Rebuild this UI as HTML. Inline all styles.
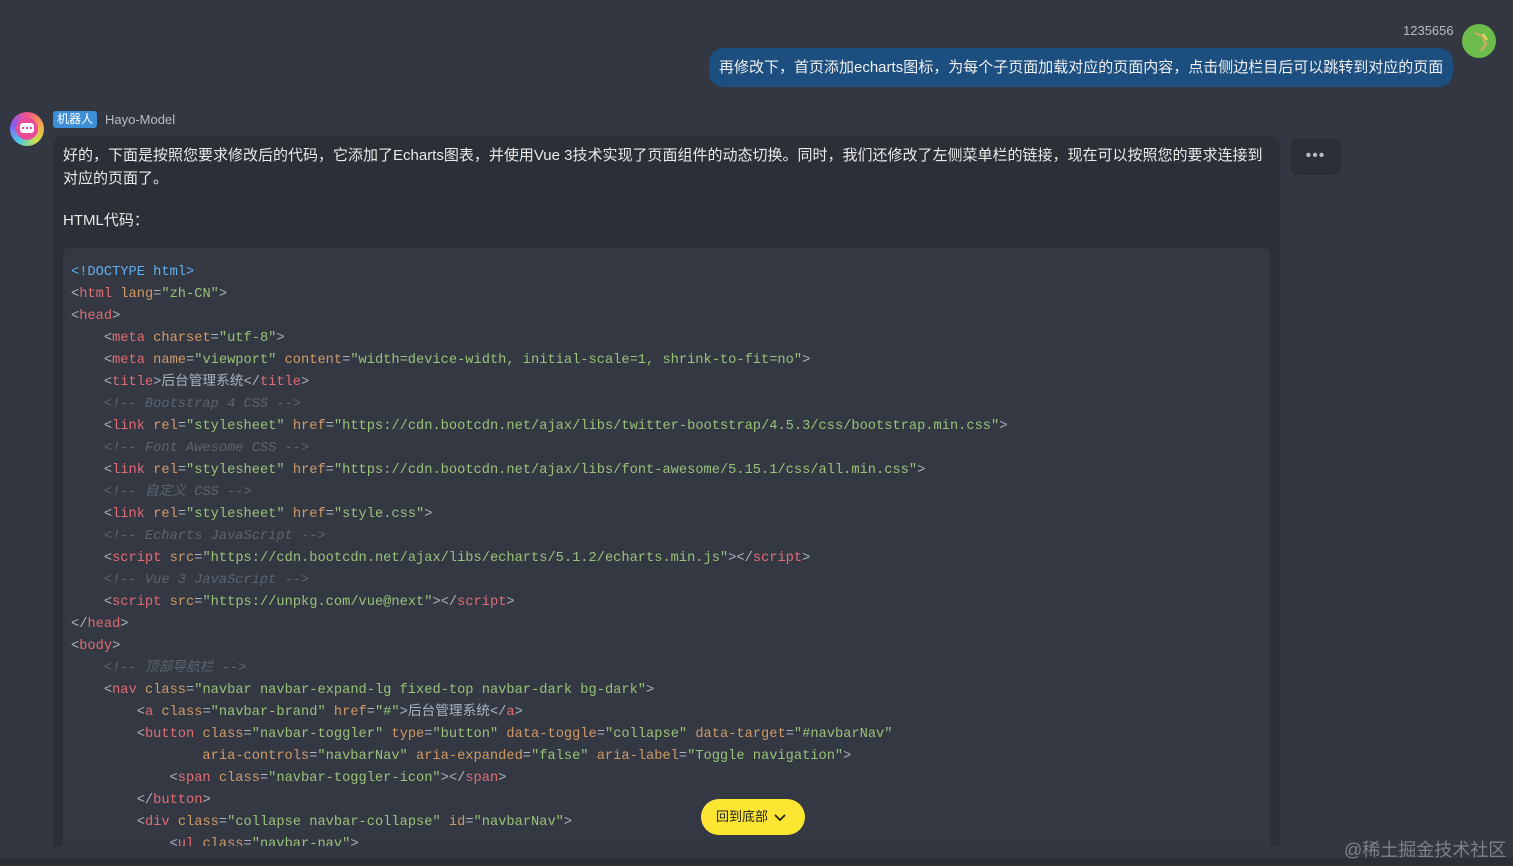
<!DOCTYPE html>
<html><head><meta charset="utf-8"><style>
*{margin:0;padding:0;box-sizing:border-box}
body{width:1513px;height:866px;overflow:hidden;background:#323741;font-family:"Liberation Sans","Noto Sans CJK SC",sans-serif;color:#e6e6e6;position:relative}
.abs{position:absolute}
.ub{left:709px;top:48px;width:744px;height:39px;background:#1c4f80;border-radius:14px;font-size:15px;line-height:39px;padding-left:10px;color:#f0f0f0;white-space:nowrap;letter-spacing:0px}
.bubble{left:53px;top:136px;width:1227px;height:710px;background:#2b2f36;border-radius:10px 10px 0 0;overflow:hidden}
.txt{position:absolute;left:10px;top:8px;width:1210px;font-size:15px;line-height:23px;color:#eaeaea;letter-spacing:0px}
.code{position:absolute;left:10px;top:112px;width:1207px;height:640px;background:#333842;border-radius:6px}
pre{position:absolute;left:8px;top:14px;font-family:"Liberation Mono","Noto Sans CJK SC",monospace;font-size:13.7px;line-height:22px;color:#abb2bf}
.t{color:#e06c75}.a{color:#d19a66}.s{color:#98c379}.c{color:#5c6370;font-style:italic}.b{color:#61afef}
</style></head><body>
<div class="abs" style="left:1403px;top:23px;font-size:13px;color:#b9bcc2">1235656</div>
<div class="abs" style="left:1462px;top:24px;width:34px;height:34px;border-radius:50%;background:#6dbb4a"><svg width="34" height="34"><path d="M13 9 L20 12 L24 20 L19 27" stroke="#d9a860" stroke-width="2" fill="none"/><path d="M21 10 L25 16" stroke="#e7e070" stroke-width="2"/></svg></div>
<div class="abs ub">再修改下，首页添加echarts图标，为每个子页面加载对应的页面内容，点击侧边栏目后可以跳转到对应的页面</div>
<div class="abs" style="left:10px;top:112px;width:34px;height:34px;border-radius:50%;background:conic-gradient(#f0508a,#f7a64a,#c8e04a,#4ac8e8,#8a5af0,#f0508a)"><div style="position:absolute;left:6px;top:6px;width:22px;height:22px;border-radius:50%;background:#e94a9a"></div><div style="position:absolute;left:10px;top:11px;width:14px;height:10px;border-radius:3px;background:#fff"></div><div style="position:absolute;left:12px;top:15px;width:10px;height:2px;background:repeating-linear-gradient(90deg,#e94a9a 0 2px,transparent 2px 4px)"></div></div>
<div class="abs" style="left:53px;top:111px;width:44px;height:17px;background:#3d8fd8;border-radius:3px;font-size:12px;line-height:17px;text-align:center;color:#fff">机器人</div>
<div class="abs" style="left:105px;top:111px;font-size:13px;line-height:17px;color:#b9bcc2">Hayo-Model</div>
<div class="abs bubble">
<div class="txt" style="top:8px">好的，下面是按照您要求修改后的代码，它添加了Echarts图表，并使用Vue 3技术实现了页面组件的动态切换。同时，我们还修改了左侧菜单栏的链接，现在可以按照您的要求连接到对应的页面了。<br><br><div style="margin-top:-4px">HTML代码：</div></div>
<div class="code"><pre><span class="b">&lt;!DOCTYPE html&gt;</span>
&lt;<span class="t">html</span> <span class="a">lang</span>=<span class="s">"zh-CN"</span>&gt;
&lt;<span class="t">head</span>&gt;
    &lt;<span class="t">meta</span> <span class="a">charset</span>=<span class="s">"utf-8"</span>&gt;
    &lt;<span class="t">meta</span> <span class="a">name</span>=<span class="s">"viewport"</span> <span class="a">content</span>=<span class="s">"width=device-width, initial-scale=1, shrink-to-fit=no"</span>&gt;
    &lt;<span class="t">title</span>&gt;后台管理系统&lt;/<span class="t">title</span>&gt;
    <span class="c">&lt;!-- Bootstrap 4 CSS --&gt;</span>
    &lt;<span class="t">link</span> <span class="a">rel</span>=<span class="s">"stylesheet"</span> <span class="a">href</span>=<span class="s">"https://cdn.bootcdn.net/ajax/libs/twitter-bootstrap/4.5.3/css/bootstrap.min.css"</span>&gt;
    <span class="c">&lt;!-- Font Awesome CSS --&gt;</span>
    &lt;<span class="t">link</span> <span class="a">rel</span>=<span class="s">"stylesheet"</span> <span class="a">href</span>=<span class="s">"https://cdn.bootcdn.net/ajax/libs/font-awesome/5.15.1/css/all.min.css"</span>&gt;
    <span class="c">&lt;!-- 自定义 CSS --&gt;</span>
    &lt;<span class="t">link</span> <span class="a">rel</span>=<span class="s">"stylesheet"</span> <span class="a">href</span>=<span class="s">"style.css"</span>&gt;
    <span class="c">&lt;!-- Echarts JavaScript --&gt;</span>
    &lt;<span class="t">script</span> <span class="a">src</span>=<span class="s">"https://cdn.bootcdn.net/ajax/libs/echarts/5.1.2/echarts.min.js"</span>&gt;&lt;/<span class="t">script</span>&gt;
    <span class="c">&lt;!-- Vue 3 JavaScript --&gt;</span>
    &lt;<span class="t">script</span> <span class="a">src</span>=<span class="s">"https://unpkg.com/vue@next"</span>&gt;&lt;/<span class="t">script</span>&gt;
&lt;/<span class="t">head</span>&gt;
&lt;<span class="t">body</span>&gt;
    <span class="c">&lt;!-- 顶部导航栏 --&gt;</span>
    &lt;<span class="t">nav</span> <span class="a">class</span>=<span class="s">"navbar navbar-expand-lg fixed-top navbar-dark bg-dark"</span>&gt;
        &lt;<span class="t">a</span> <span class="a">class</span>=<span class="s">"navbar-brand"</span> <span class="a">href</span>=<span class="s">"#"</span>&gt;后台管理系统&lt;/<span class="t">a</span>&gt;
        &lt;<span class="t">button</span> <span class="a">class</span>=<span class="s">"navbar-toggler"</span> <span class="a">type</span>=<span class="s">"button"</span> <span class="a">data-toggle</span>=<span class="s">"collapse"</span> <span class="a">data-target</span>=<span class="s">"#navbarNav"</span>
                <span class="a">aria-controls</span>=<span class="s">"navbarNav"</span> <span class="a">aria-expanded</span>=<span class="s">"false"</span> <span class="a">aria-label</span>=<span class="s">"Toggle navigation"</span>&gt;
            &lt;<span class="t">span</span> <span class="a">class</span>=<span class="s">"navbar-toggler-icon"</span>&gt;&lt;/<span class="t">span</span>&gt;
        &lt;/<span class="t">button</span>&gt;
        &lt;<span class="t">div</span> <span class="a">class</span>=<span class="s">"collapse navbar-collapse"</span> <span class="a">id</span>=<span class="s">"navbarNav"</span>&gt;
            &lt;<span class="t">ul</span> <span class="a">class</span>=<span class="s">"navbar-nav"</span>&gt;</pre></div>
</div>
<div class="abs" style="left:1289px;top:137px;width:53px;height:39px;background:#2b2f36;border:1px solid #363b44;border-radius:8px;text-align:center;line-height:36px;color:#b9bcc2;font-size:16px;letter-spacing:1px">•••</div>
<div class="abs" style="left:701px;top:799px;width:104px;height:36px;background:#fde632;border-radius:18px;color:#222;font-size:13px;line-height:36px;padding-left:15px">回到底部 <svg width="12" height="8" style="vertical-align:middle;margin-left:2px"><path d="M1 1 L6 6 L11 1" stroke="#222" stroke-width="1.8" fill="none"/></svg></div>
<div class="abs" style="left:0;top:858px;width:1513px;height:8px;background:#2a2e35"></div>
<div class="abs" style="left:1344px;top:836px;font-size:18px;color:#7d8189">@稀土掘金技术社区</div>
</body></html>
